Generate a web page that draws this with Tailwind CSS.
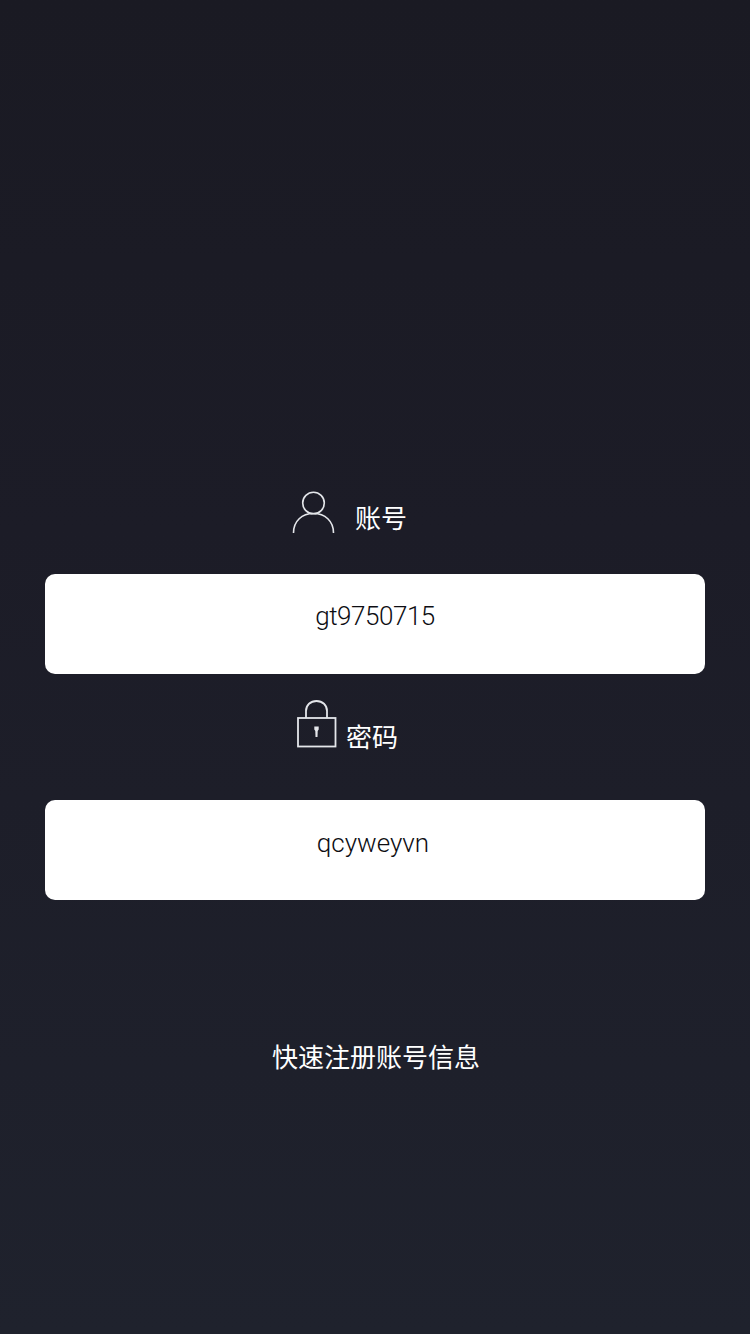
<!DOCTYPE html>
<html lang="zh-CN">
<head>
    <meta charset="UTF-8">
    <meta name="viewport" content="width=device-width, initial-scale=1.0">
    <title>账号</title>
    <script src="https://cdn.jsdelivr.net/npm/@tailwindcss/browser@4"></script>
</head>
<body class="w-[750px] h-[1334px] overflow-hidden bg-gradient-to-b from-[#1a1a23] via-[#1c1c27] via-40% to-[#1f222d] font-['Roboto','Noto_Sans_CJK_SC',sans-serif]">
    <div class="px-[45px] pt-[490px]">
        <div class="h-[84px] pl-[247px] flex items-start">
            <svg class="w-[44px] h-[44px] shrink-0" viewBox="0 0 44 44" fill="none" stroke="#e4e6ea" stroke-width="1.6">
                <circle cx="21.500" cy="13" r="10.800"/>
                <path d="M1.500 43C1.500 31 10 23.500 21.500 23.500C33 23.500 41.500 31 41.500 43"/>
            </svg>
            <span class="ml-[19px] mt-[10px] text-[26px] leading-[38px] text-white">账号</span>
        </div>
        <div class="h-[100px] bg-white rounded-[10px] text-center text-[26px] leading-[84px] tracking-[-0.45px] font-light text-[#0d0d12]">gt9750715</div>
        <div class="h-[126px] pl-[252px] pt-[26px] flex items-start">
            <svg class="w-[40px] h-[48px] shrink-0" viewBox="0 0 40 48" fill="none" stroke="#e4e6ea" stroke-width="1.8">
                <path d="M9 18V11C9 5 13.500 1 19.500 1C25.500 1 30 5 30 11V18"/>
                <rect x="1" y="18" width="37.500" height="28.500"/>
                <path d="M17.300 26.500H21.700V29.500L20.700 31L20.500 37H18.500L18.300 31L17.300 29.500Z" fill="#e4e6ea" stroke="none"/>
            </svg>
            <span class="ml-[9px] mt-[19px] text-[26px] leading-[38px] text-white">密码</span>
        </div>
        <div class="h-[100px] bg-white rounded-[10px] pr-[4px] text-center text-[26px] leading-[86px] font-light text-[#0d0d12]">qcyweyvn</div>
        <p class="mt-[139px] pl-[2px] text-center text-[26px] leading-[38px] text-white">快速注册账号信息</p>
    </div>
</body>
</html>
